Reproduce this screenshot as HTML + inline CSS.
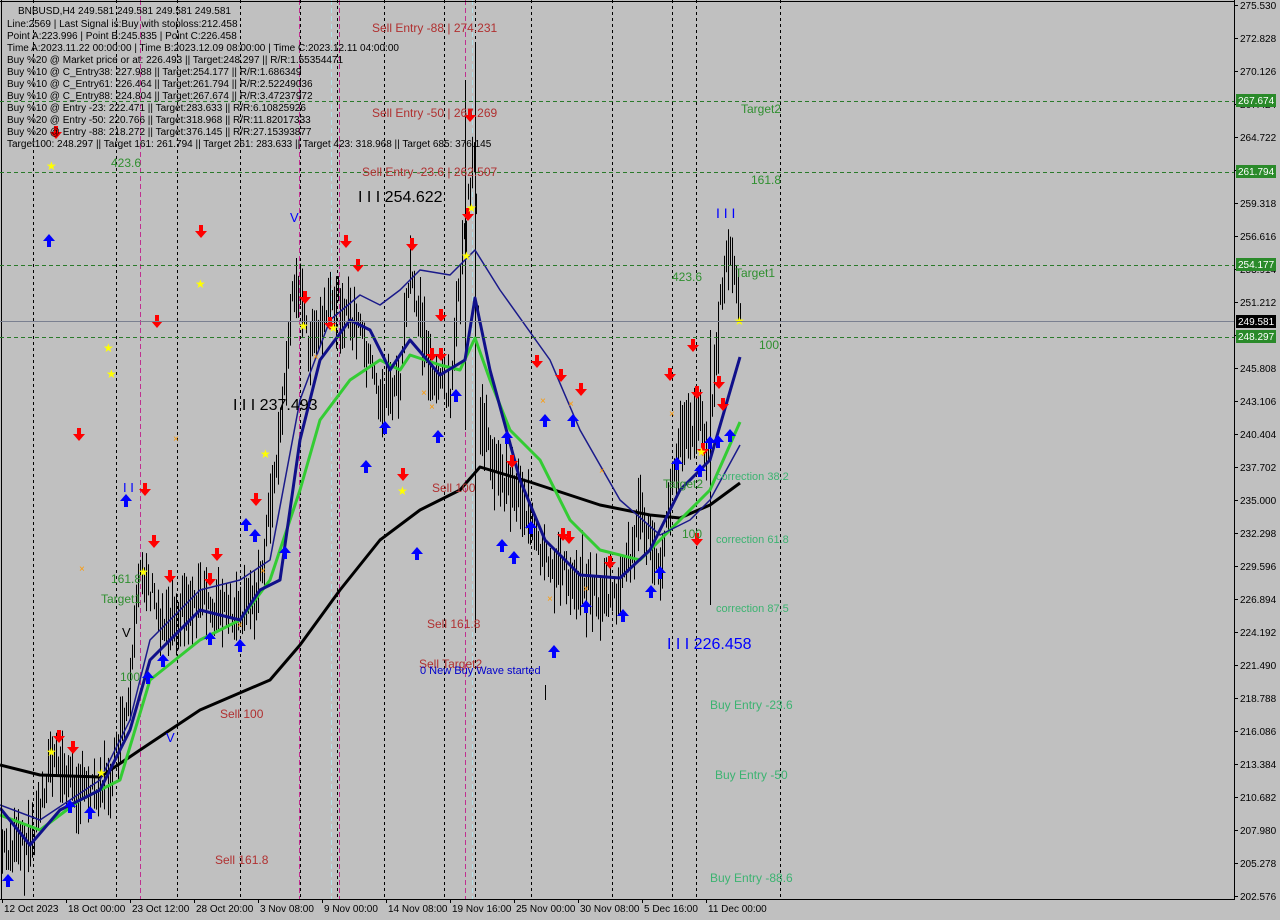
<!DOCTYPE html>
<html><head><meta charset="utf-8"><style>
html,body{margin:0;padding:0;background:#c0c0c0;width:1280px;height:920px;overflow:hidden}
svg{display:block}
text{font-family:"Liberation Sans",sans-serif}
.i{font-size:10px;fill:#000}
.ax{font-size:10px;fill:#000}
.sr{fill:#b03030;font-size:12px}
.gr{fill:#2f8f2f;font-size:12px}
.cg{fill:#3cb371;font-size:11px}
</style></head><body>
<svg id="s" width="1280" height="920" xmlns="http://www.w3.org/2000/svg">
<rect width="1280" height="920" fill="#c0c0c0"/>
<g id="vl"></g>
<g id="bars"></g>
<g id="lines"></g>
<g id="marks"></g>
<line x1="1234.5" y1="0" x2="1234.5" y2="900" stroke="#000"/>
<line x1="0" y1="899.5" x2="1234" y2="899.5" stroke="#000"/>
<line x1="0" y1="1.5" x2="1234" y2="1.5" stroke="#000"/>
<line x1="1.5" y1="0" x2="1.5" y2="900" stroke="#000"/>
<g id="axis"></g>
<g stroke="#2a7a2a" stroke-dasharray="4,3">
<line x1="0" y1="101.5" x2="1234" y2="101.5"/><line x1="0" y1="172.5" x2="1234" y2="172.5"/>
<line x1="0" y1="265.5" x2="1234" y2="265.5"/><line x1="0" y1="337.5" x2="1234" y2="337.5"/>
</g>
<line x1="0" y1="321.5" x2="1234" y2="321.5" stroke="#7a8090"/>
<rect x="1236" y="94" width="40" height="13" fill="#2a8a2a"/><text x="1238" y="104" style="fill:#fff;font-size:10px">267.674</text>
<rect x="1236" y="165" width="40" height="13" fill="#2a8a2a"/><text x="1238" y="175" style="fill:#fff;font-size:10px">261.794</text>
<rect x="1236" y="258" width="40" height="13" fill="#2a8a2a"/><text x="1238" y="268" style="fill:#fff;font-size:10px">254.177</text>
<rect x="1236" y="315" width="40" height="13" fill="#000"/><text x="1238" y="325" style="fill:#fff;font-size:10px">249.581</text>
<rect x="1236" y="330" width="40" height="13" fill="#2a8a2a"/><text x="1238" y="340" style="fill:#fff;font-size:10px">248.297</text>
<g class="i">
<text x="18" y="14">BNBUSD,H4  249.581 249.581 249.581 249.581</text>
<text x="7" y="27">Line:2569 | Last Signal is:Buy with stoploss:212.458</text>
<text x="7" y="39">Point A:223.996 | Point B:245.835 | Point C:226.458</text>
<text x="7" y="51">Time A:2023.11.22 00:00:00 | Time B:2023.12.09 08:00:00 | Time C:2023.12.11 04:00:00</text>
<text x="7" y="63">Buy %20 @ Market price or at: 226.493 || Target:248.297 || R/R:1.55354471</text>
<text x="7" y="75">Buy %10 @ C_Entry38: 227.988 || Target:254.177 || R/R:1.686349</text>
<text x="7" y="87">Buy %10 @ C_Entry61: 226.464 || Target:261.794 || R/R:2.52249036</text>
<text x="7" y="99">Buy %10 @ C_Entry88: 224.804 || Target:267.674 || R/R:3.47237972</text>
<text x="7" y="111">Buy %10 @ Entry -23: 222.471 || Target:283.633 || R/R:6.10825926</text>
<text x="7" y="123">Buy %20 @ Entry -50: 220.766 || Target:318.968 || R/R:11.82017333</text>
<text x="7" y="135">Buy %20 @ Entry -88: 218.272 || Target:376.145 || R/R:27.15393877</text>
<text x="7" y="147">Target100: 248.297 || Target 161: 261.794 || Target 261: 283.633 || Target 423: 318.968 || Target 685: 376.145</text>
</g>
<text x="372" y="32" class="sr">Sell Entry -88 | 274.231</text>
<text x="372" y="117" class="sr">Sell Entry -50 | 267.269</text>
<text x="362" y="176" class="sr">Sell Entry -23.6 | 262.507</text>
<text x="432" y="492" class="sr">Sell 100</text>
<text x="427" y="628" class="sr">Sell 161.8</text>
<text x="419" y="668" class="sr">Sell Target2</text>
<text x="220" y="718" class="sr">Sell 100</text>
<text x="215" y="864" class="sr">Sell 161.8</text>
<text x="420" y="674" style="fill:#0000cc;font-size:11px">0 New Buy Wave started</text>
<text x="358" y="202" style="font-size:16px;fill:#000">I I I 254.622</text>
<text x="233" y="410" style="font-size:16px;fill:#000">I I I 237.493</text>
<text x="667" y="649" style="font-size:16px;fill:#0000ff">I I I 226.458</text>
<text x="716" y="218" style="font-size:14px;fill:#0000ff">I I I</text>
<text x="111" y="167" class="gr">423.6</text>
<text x="741" y="113" class="gr">Target2</text>
<text x="751" y="184" class="gr">161.8</text>
<text x="672" y="281" class="gr">423.6</text>
<text x="735" y="277" class="gr">Target1</text>
<text x="759" y="349" class="gr">100</text>
<text x="663" y="488" class="gr">Target2</text>
<text x="682" y="538" class="gr">100</text>
<text x="111" y="583" class="gr">161.8</text>
<text x="101" y="603" class="gr">Target1</text>
<text x="120" y="681" class="gr">100</text>
<text x="716" y="480" class="cg">correction 38.2</text>
<text x="716" y="543" class="cg">correction 61.8</text>
<text x="716" y="612" class="cg">correction 87.5</text>
<text x="710" y="709" class="cg" style="font-size:12px">Buy Entry -23.6</text>
<text x="715" y="779" class="cg" style="font-size:12px">Buy Entry -50</text>
<text x="710" y="882" class="cg" style="font-size:12px">Buy Entry -88.6</text>
<text x="290" y="222" style="fill:#0000ff;font-size:13px">V</text>
<text x="166" y="742" style="fill:#0000ff;font-size:13px">V</text>
<text x="122" y="637" style="fill:#000;font-size:13px">V</text>
<text x="123" y="492" style="fill:#0000ff;font-size:13px">I I</text>
</svg>
<script>
var NS="http://www.w3.org/2000/svg",s=document.getElementById('s');
function el(g,t,a){var e=document.createElementNS(NS,t);for(var k in a)e.setAttribute(k,a[k]);document.getElementById(g).appendChild(e);return e;}
[33,116,177,240,300,337,384,444,475,531,612,672,696,780].forEach(function(x){el('vl','line',{x1:x+.5,y1:0,x2:x+.5,y2:899,stroke:'#000','stroke-dasharray':'3,3'});});
[140,299,339,465].forEach(function(x){el('vl','line',{x1:x+.5,y1:0,x2:x+.5,y2:899,stroke:'#c03090','stroke-dasharray':'5,3'});});
[331,472].forEach(function(x){el('vl','line',{x1:x+.5,y1:0,x2:x+.5,y2:899,stroke:'#b0e0e8','stroke-dasharray':'5,3'});});
for(var i=0;i<28;i++){var p=275.53-i*2.702;var y=5+i*33;el('axis','line',{x1:1234,y1:y+.5,x2:1238,y2:y+.5,stroke:'#000'});var t=el('axis','text',{x:1240,y:y+4,'class':'ax'});t.textContent=p.toFixed(3);}
var d=[["12 Oct 2023",2],["18 Oct 00:00",66],["23 Oct 12:00",130],["28 Oct 20:00",194],["3 Nov 08:00",258],["9 Nov 00:00",322],["14 Nov 08:00",386],["19 Nov 16:00",450],["25 Nov 00:00",514],["30 Nov 08:00",578],["5 Dec 16:00",642],["11 Dec 00:00",706]];
d.forEach(function(a){el('axis','line',{x1:a[1]+.5,y1:899,x2:a[1]+.5,y2:903,stroke:'#000'});var t=el('axis','text',{x:a[1]+2,y:912,'class':'ax'});t.textContent=a[0];});
function interp(P,x){for(var i=0;i<P.length-1;i++){if(x>=P[i][0]&&x<=P[i+1][0]){var f=(x-P[i][0])/(P[i+1][0]-P[i][0]);return P[i][1]+f*(P[i+1][1]-P[i][1]);}}return P[P.length-1][1];}
var price=[[0,850],[30,845],[50,760],[80,790],[110,780],[130,700],[140,560],[160,620],[200,600],[240,620],[260,580],[280,430],[295,270],[310,350],[335,300],[360,330],[380,400],[400,380],[410,270],[430,370],[450,390],[465,230],[475,150],[480,420],[500,480],[520,490],[540,560],[560,570],[580,580],[600,600],[620,590],[640,520],[660,560],[680,440],[700,420],[710,450],[720,300],[730,250],[740,320]];
var seed=7;function r(){seed=(seed*9301+49297)%233280;return seed/233280;}
for(var x=2;x<=740;x+=2){var c=interp(price,x);var h=15+r()*60;var o=(r()-0.5)*30;el('bars','line',{x1:x+.5,y1:c+o-h/2,x2:x+.5,y2:c+o+h/2,stroke:'#000','stroke-width':1});}
el('bars','line',{x1:475.5,y1:45,x2:475.5,y2:630,stroke:'#000'});
el('bars','line',{x1:465.5,y1:80,x2:465.5,y2:430,stroke:'#000'});
el('bars','line',{x1:710.5,y1:330,x2:710.5,y2:605,stroke:'#000'});
el('bars','line',{x1:545.5,y1:685,x2:545.5,y2:700,stroke:'#000'});
function pl(P,c,w){el('lines','polyline',{points:P.map(function(p){return p.join(',')}).join(' '),fill:'none',stroke:c,'stroke-width':w,'stroke-linejoin':'round'});}
pl([[0,765],[40,775],[100,777],[140,750],[200,710],[270,680],[300,645],[340,590],[380,540],[420,510],[460,490],[480,467],[530,482],[600,505],[650,515],[680,518],[710,505],[740,483]],'#000',3);
pl([[0,815],[40,830],[80,800],[120,780],[135,730],[150,680],[200,640],[240,620],[270,580],[300,490],[320,420],[350,380],[380,360],[400,370],[410,355],[440,365],[460,370],[475,338],[490,380],[510,430],[540,460],[570,520],[600,550],[640,560],[680,520],[710,490],[740,422]],'#33cc33',3);
pl([[0,805],[40,820],[100,780],[130,720],[150,640],[200,590],[240,580],[270,560],[300,400],[330,320],[360,295],[380,305],[400,290],[420,270],[450,275],[475,250],[500,290],[550,360],[580,430],[620,500],[660,535],[690,520],[710,500],[740,445]],'#1a1a8a',1.5);
pl([[0,808],[30,845],[60,810],[100,790],[130,730],[150,660],[200,610],[240,620],[260,590],[280,580],[300,440],[320,360],[350,320],[370,330],[390,370],[410,340],[440,375],[465,360],[475,298],[490,370],[520,480],[545,540],[580,575],[620,578],[650,550],[680,490],[710,460],[740,357]],'#10108a',3);
function down(x,y){el('marks','path',{d:'M'+(x-2)+' '+(y-7)+'h4v6h4l-6 7l-6-7h4z',fill:'#ff0000'});}
function up(x,y){el('marks','path',{d:'M'+(x-2)+' '+(y+7)+'h4v-6h4l-6-7l-6 7h4z',fill:'#0000ff'});}
function star(x,y){var t=el('marks','text',{x:x-4,y:y+4,style:'fill:#ffff00;font-size:12px'});t.textContent='★';}
function cr(x,y){var t=el('marks','text',{x:x-3,y:y+4,style:'fill:#ff9900;font-size:10px'});t.textContent='×';}
[[56,133],[201,232],[157,322],[79,435],[145,490],[154,542],[170,577],[210,580],[217,555],[256,500],[305,298],[346,242],[358,266],[330,324],[412,245],[403,475],[441,316],[432,355],[441,355],[470,116],[468,215],[537,362],[561,376],[581,390],[512,462],[563,535],[569,538],[610,563],[670,375],[693,346],[697,393],[719,383],[723,405],[703,450],[697,540],[59,737],[73,748]].forEach(function(a){down(a[0],a[1]);});
[[49,240],[126,500],[246,524],[255,535],[285,552],[366,466],[385,427],[417,553],[438,436],[456,395],[507,437],[502,545],[514,557],[531,527],[545,420],[573,420],[554,651],[586,606],[623,615],[651,591],[660,572],[677,463],[700,470],[710,442],[730,435],[718,441],[240,645],[210,638],[148,677],[163,660],[90,812],[70,806],[8,880]].forEach(function(a){up(a[0],a[1]);});
[[50,166],[107,348],[110,374],[199,284],[264,454],[302,326],[332,328],[401,491],[470,208],[465,256],[738,321],[142,572],[50,752],[100,773],[700,452]].forEach(function(a){star(a[0],a[1]);});
[[82,568],[176,438],[316,356],[424,392],[432,406],[543,400],[571,403],[602,470],[672,413],[550,598],[586,588],[263,570],[240,624]].forEach(function(a){cr(a[0],a[1]);});
</script>
</body></html>
